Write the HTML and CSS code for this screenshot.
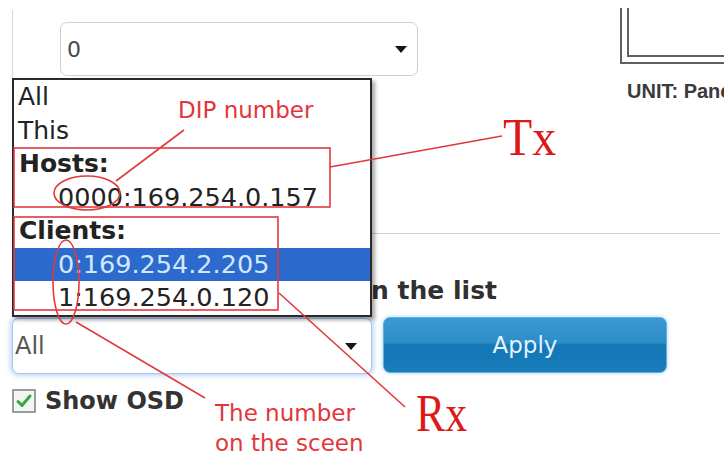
FILE: index.html
```html
<!DOCTYPE html>
<html>
<head>
<meta charset="utf-8">
<title>Receiver list</title>
<link rel="stylesheet" href="styles.css">
</head>
<body>
<div class="screen">
  <div class="page">
    <div class="top-row">
      <div class="edge-line"></div>
      <div class="select select-top">
        <span class="select-value">0</span>
        <span class="caret"></span>
      </div>
      <div class="unit">
        <div class="frame"><div class="frame-inner"></div></div>
        <div class="unit-label">UNIT: Panel</div>
      </div>
    </div>
    <div class="panel-body"></div>
    <div class="heading-row">
      <h2 class="heading">Select the receiver in the list</h2>
    </div>
    <div class="controls">
      <div class="select select-rx">
        <span class="select-value">All</span>
        <span class="caret"></span>
      </div>
      <button class="apply">Apply</button>
    </div>
    <label class="osd">
      <span class="checkbox">
        <svg width="24" height="24" viewBox="0 0 24 24">
          <rect x="1" y="1" width="22" height="22" fill="#f3f5f3" stroke="#7c7c7c" stroke-width="1.5"/>
          <path d="M6 12.5 L10 16.5 L18 7" fill="none" stroke="#35a845" stroke-width="3" stroke-linecap="round" stroke-linejoin="round"/>
        </svg>
      </span>
      <span class="osd-text">Show OSD</span>
    </label>
  </div>

  <ul class="dropdown">
    <li class="item">All</li>
    <li class="item">This</li>
    <li class="item group">Hosts:</li>
    <li class="item sub">0000:169.254.0.157</li>
    <li class="item group">Clients:</li>
    <li class="item sub selected">0:169.254.2.205</li>
    <li class="item sub">1:169.254.0.120</li>
  </ul>

  <svg class="notes" width="724" height="456" viewBox="0 0 724 456">
    <rect class="mark" x="14" y="148" width="316" height="59"/>
    <rect class="mark" x="14" y="217" width="264" height="93"/>
    <ellipse class="mark" cx="87" cy="193" rx="33" ry="17"/>
    <ellipse class="mark" cx="66" cy="282" rx="13" ry="42"/>
    <line class="mark" x1="184" y1="130" x2="116" y2="181"/>
    <line class="mark" x1="330" y1="167" x2="502" y2="136"/>
    <line class="mark" x1="76" y1="322" x2="205" y2="398"/>
    <line class="mark" x1="279" y1="293" x2="405" y2="407"/>
    <text class="note" x="178" y="118">DIP number</text>
    <text class="note" x="215" y="421">The number</text>
    <text class="note" x="215" y="451">on the sceen</text>
    <text class="big" x="503" y="155" textLength="53" lengthAdjust="spacingAndGlyphs">Tx</text>
    <text class="big" x="416" y="431" textLength="51" lengthAdjust="spacingAndGlyphs">Rx</text>
  </svg>
</div>
</body>
</html>
```

FILE: styles.css
```css
html, body {
  margin: 0;
  padding: 0;
  background: #ffffff;
}

.screen {
  position: relative;
  width: 724px;
  height: 456px;
  overflow: hidden;
  font-family: "DejaVu Sans", Verdana, sans-serif;
  color: #333;
}

.page {
  display: flex;
  flex-direction: column;
}

/* top row */
.top-row {
  display: flex;
  align-items: flex-start;
  height: 78px;
}

.edge-line {
  width: 1px;
  height: 68px;
  margin-top: 10px;
  margin-left: 12px;
  background: #d6d6d6;
}

.select {
  box-sizing: border-box;
  display: flex;
  align-items: center;
  justify-content: space-between;
  background: #fff;
  border-radius: 7px;
}

.select-top {
  width: 358px;
  height: 54px;
  margin-left: 47px;
  margin-top: 22px;
  border: 1px solid #d0d0d0;
  padding: 0 10px 0 6px;
  font-size: 22px;
  color: #4a4a4a;
}

.caret {
  width: 0;
  height: 0;
  border-left: 6px solid transparent;
  border-right: 6px solid transparent;
  border-top: 7px solid #151515;
}

.unit {
  margin-left: auto;
  width: 104px;
  margin-top: 8px;
  overflow: hidden;
}

.frame {
  height: 54px;
  border-left: 2px solid #606060;
  border-bottom: 2px solid #606060;
}

.frame-inner {
  height: 47px;
  margin-left: 5px;
  border-left: 2px solid #606060;
  border-bottom: 2px solid #606060;
}

.unit-label {
  margin-top: 16px;
  padding-left: 7px;
  font-family: "Liberation Sans", Arial, sans-serif;
  font-size: 20px;
  font-weight: bold;
  line-height: 22px;
  color: #3a3a3a;
  white-space: nowrap;
}

/* separator panel */
.panel-body {
  height: 155px;
  margin: 0 4px 0 12px;
  border-bottom: 1px solid #cfcfcf;
}

/* heading */
.heading-row {
  display: flex;
  justify-content: flex-end;
  width: 485px;
  margin-left: 12px;
  padding-top: 42px;
}

.heading {
  margin: 0;
  font-size: 25px;
  line-height: 30px;
  font-weight: bold;
  color: #303030;
  white-space: nowrap;
}

/* controls */
.controls {
  display: flex;
  align-items: flex-start;
  gap: 11px;
  margin-top: 12px;
  margin-left: 12px;
}

.select-rx {
  width: 360px;
  height: 56px;
  border: 1px solid #a6c8ee;
  box-shadow: 0 0 5px 2px rgba(120, 165, 235, 0.45);
  padding: 0 14px 0 2px;
  font-size: 24px;
  color: #555;
}

.apply {
  box-sizing: border-box;
  width: 284px;
  height: 56px;
  margin-top: -1px;
  border: 1px solid #5fb0de;
  border-radius: 7px;
  background: linear-gradient(to bottom, #3a99d0 0%, #2c8dc8 46%, #1477b6 50%, #1a7dba 100%);
  box-shadow: 0 0 4px rgba(110, 190, 240, 0.6);
  color: #e2f3ff;
  font-family: "DejaVu Sans", Verdana, sans-serif;
  font-size: 23px;
  padding: 0;
}

/* show osd */
.osd {
  display: flex;
  align-items: center;
  gap: 9px;
  margin-top: 13px;
  margin-left: 12px;
}

.checkbox {
  display: block;
  width: 24px;
  height: 24px;
}

.checkbox svg {
  display: block;
}

.osd-text {
  font-size: 24px;
  font-weight: bold;
  color: #333;
}

/* open dropdown list */
.dropdown {
  position: absolute;
  left: 12px;
  top: 78px;
  width: 360px;
  box-sizing: border-box;
  margin: 0;
  padding: 0;
  list-style: none;
  background: #fff;
  border: 2px solid #2a2a2a;
  box-shadow: 3px 3px 4px rgba(0, 0, 0, 0.35);
}

.item {
  height: 33.5px;
  line-height: 33.5px;
  padding-left: 4px;
  font-size: 25px;
  color: #222;
  white-space: nowrap;
}

.group {
  font-weight: bold;
  padding-left: 5px;
}

.sub {
  padding-left: 44px;
  font-size: 25.5px;
}

.selected {
  background: #2c6bcd;
  color: #d3e7ff;
}

/* annotations */
.notes {
  position: absolute;
  left: 0;
  top: 0;
  pointer-events: none;
}

.mark {
  fill: none;
  stroke: #e0393e;
  stroke-width: 1.6;
}

.note {
  font-family: "DejaVu Sans", Verdana, sans-serif;
  font-size: 23px;
  fill: #e2363c;
}

.big {
  font-family: "Liberation Serif", "Times New Roman", serif;
  font-size: 52px;
  fill: #dc1a1a;
}
```
